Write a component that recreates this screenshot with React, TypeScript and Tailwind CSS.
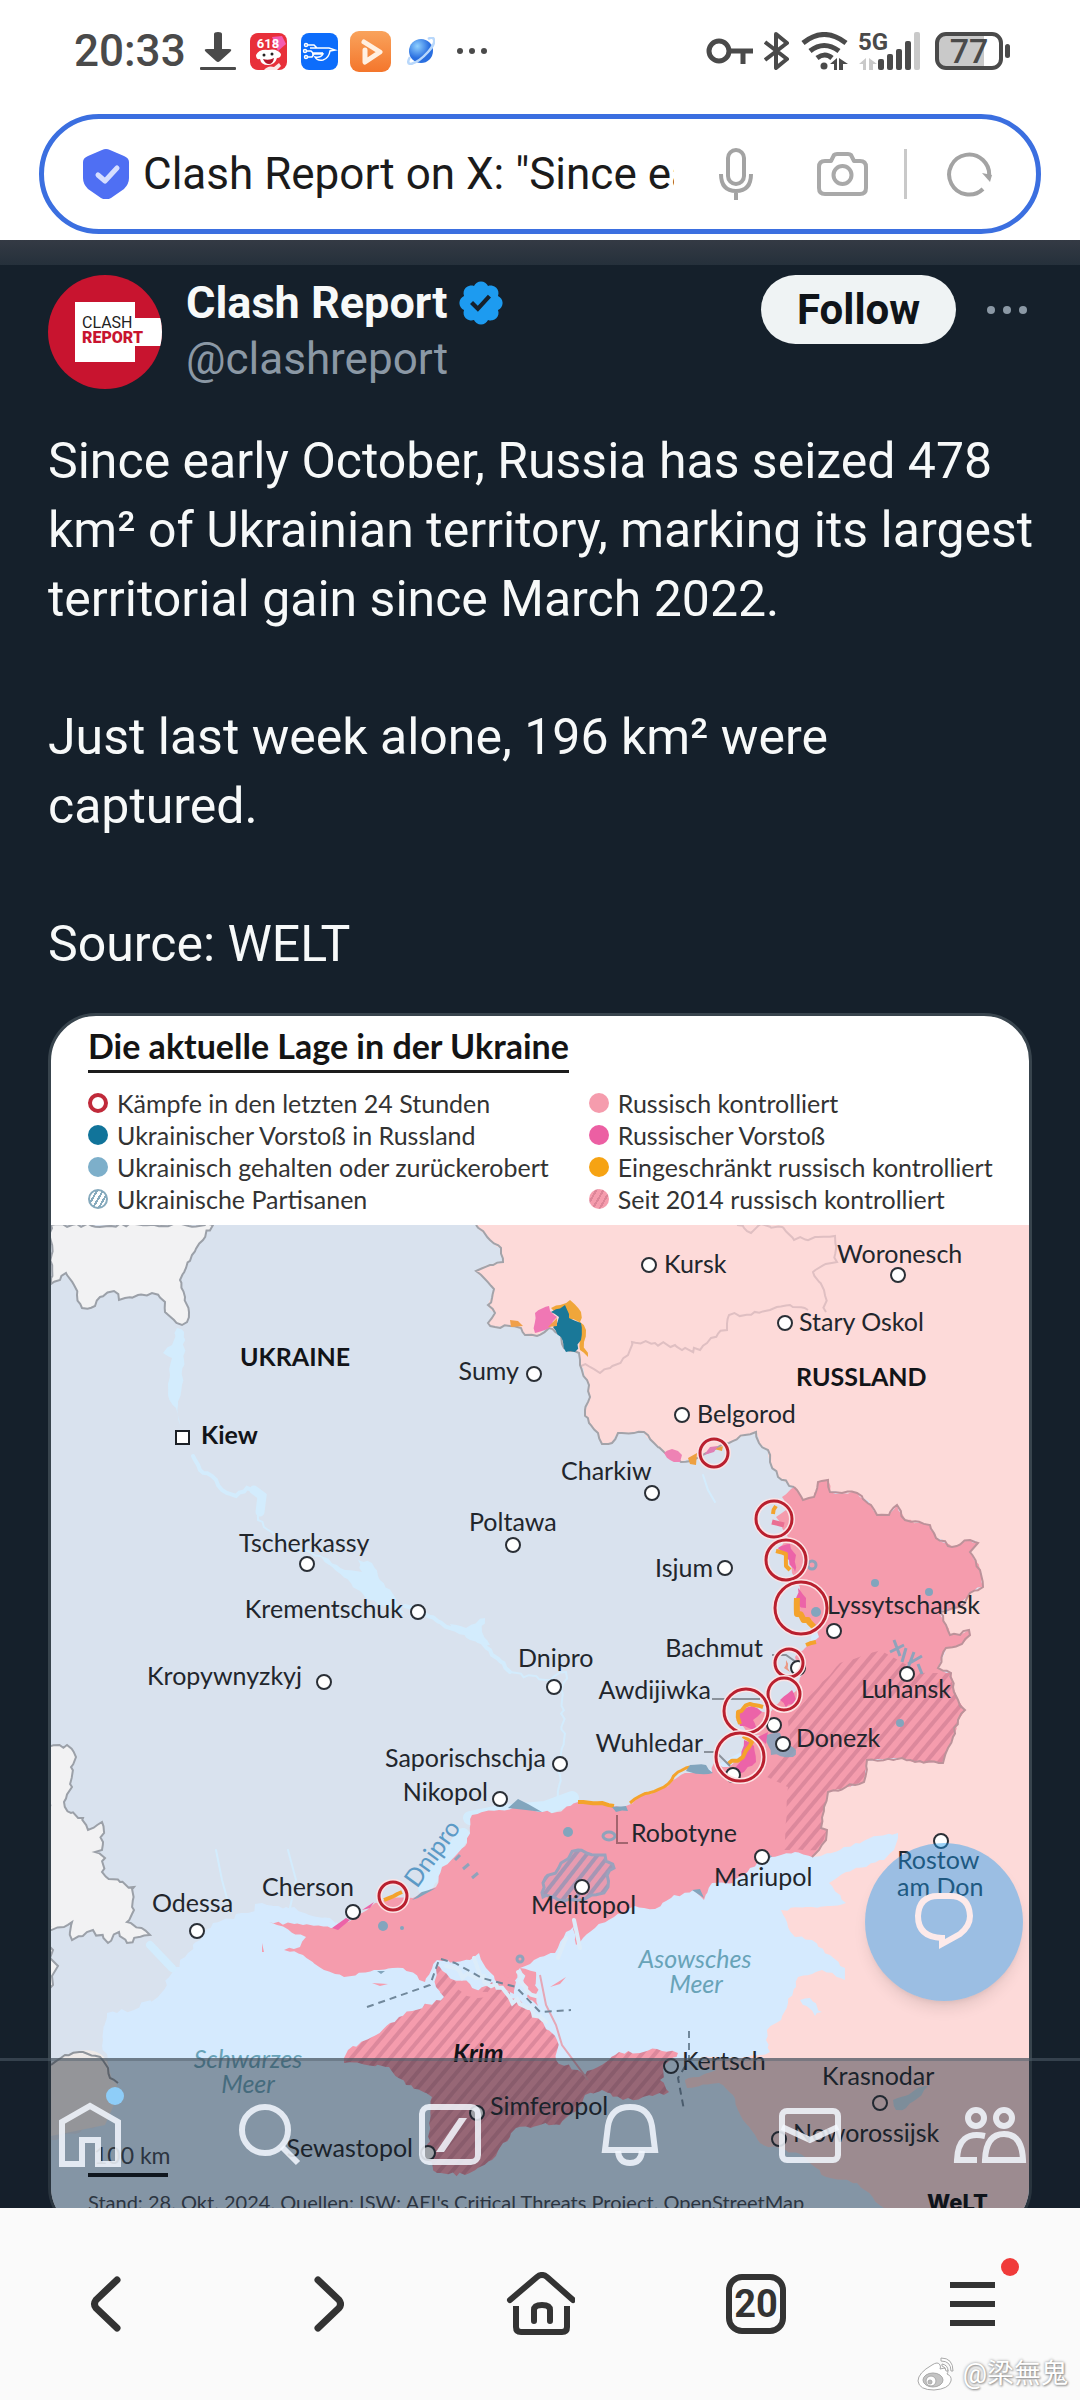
import type { ReactNode } from "react";

type Point = [number, number];

// Turns a coarse outline into a ragged coast / border line. Seeded, so it always draws the same.
function jag(flat: number[], amp = 3, closed = true): string {
  let seed = flat.length * 97 + 13;
  const rand = () => {
    seed = (seed * 1103515245 + 12345) % 2147483648;
    return seed / 2147483648 - 0.5;
  };
  const pts: Point[] = [];
  for (let i = 0; i < flat.length; i += 2) pts.push([flat[i], flat[i + 1]]);
  const out: string[] = [];
  pts.forEach((p, i) => {
    out.push(`${p[0]},${p[1]}`);
    const next = pts[i + 1] ?? (closed ? pts[0] : undefined);
    if (!next) return;
    const dist = Math.hypot(next[0] - p[0], next[1] - p[1]);
    if (dist > 220) return;
    const steps = Math.max(1, Math.round(dist / 5));
    for (let s = 1; s < steps; s++) {
      const t = s / steps;
      out.push(
        `${(p[0] + (next[0] - p[0]) * t + rand() * amp).toFixed(1)},${(p[1] + (next[1] - p[1]) * t + rand() * amp).toFixed(1)}`,
      );
    }
  });
  return `M${out.join(" L")}${closed ? " Z" : ""}`;
}

const northBorder = [
  476, 1225, 490, 1240, 501, 1248, 503, 1262, 490, 1265, 476, 1271, 484, 1278, 494, 1289, 492, 1298, 488, 1305, 495, 1313,
  488, 1323, 495, 1327, 510, 1326, 521, 1328, 525, 1335, 537, 1336, 549, 1328, 561, 1335, 564, 1348, 579, 1353, 580, 1365,
  587, 1380, 590, 1397, 585, 1410, 589, 1423, 598, 1433, 602, 1444, 612, 1443, 618, 1433, 644, 1432, 654, 1443, 664, 1452,
  681, 1462, 697, 1458, 713, 1450, 729, 1443, 745, 1435, 756, 1432, 759, 1443, 768, 1450, 770, 1462, 778, 1477, 794, 1487,
];

const eastBorder = [
  794, 1487, 803, 1500, 814, 1497, 818, 1482, 828, 1480, 830, 1492, 842, 1493, 857, 1493, 871, 1505, 877, 1515, 889, 1515,
  897, 1505, 905, 1520, 930, 1525, 936, 1538, 952, 1547, 970, 1540, 978, 1543, 970, 1552, 980, 1570, 983, 1587, 970, 1593,
  960, 1607, 940, 1612, 946, 1625, 950, 1635, 960, 1635, 969, 1630, 970, 1635, 962, 1644, 946, 1648, 938, 1668, 951, 1673,
  953, 1687, 958, 1700, 965, 1710, 958, 1720, 953, 1737, 948, 1748, 943, 1763, 915, 1762, 902, 1758, 867, 1760, 864, 1782,
  846, 1787, 828, 1792, 824, 1807, 821, 1828, 827, 1830, 826, 1840, 819, 1850, 812, 1857,
];

const russiaCoast = [
  840, 1850, 870, 1838, 898, 1833, 894, 1850, 884, 1860, 846, 1872, 829, 1883, 846, 1903, 812, 1907, 781, 1910, 788, 1927,
  795, 1937, 812, 1940, 830, 1955, 845, 1968, 845, 1980, 822, 1970, 798, 1977, 788, 2003, 781, 2020, 767, 2030, 766, 2040,
  770, 2052, 740, 2058, 706, 2056, 700, 2066, 716, 2070, 685, 2080, 687, 2088, 719, 2083, 733, 2095, 743, 2120, 760, 2143,
  805, 2157, 826, 2177, 857, 2183, 884, 2208, 900, 2232,
];

const occupiedCoast = [
  795, 1852, 781, 1855, 767, 1858, 750, 1868, 733, 1883, 712, 1883, 704, 1900, 693, 1890, 671, 1898, 655, 1909, 635, 1906,
  614, 1917, 595, 1928, 583, 1938, 576, 1945, 574, 1926, 566, 1932, 559, 1945, 555, 1953, 540, 1957, 534, 1960, 520, 1968,
  512, 1985, 500, 1990, 494, 1976, 486, 1968, 479, 1953, 470, 1960, 455, 1962, 437, 1960, 425, 1982, 403, 1968, 379, 1970,
  344, 1977, 324, 1970, 303, 1955, 284, 1950, 300, 1947, 306, 1937, 269, 1922, 303, 1925, 336, 1928, 362, 1913, 375, 1903,
  393, 1898, 413, 1898, 436, 1887, 442, 1867, 458, 1853, 467, 1843, 472, 1815, 499, 1810, 520, 1807, 539, 1812, 557, 1812,
  578, 1802, 602, 1803, 623, 1808, 640, 1797, 664, 1788, 685, 1773, 712, 1772, 714, 1763, 729, 1767, 743, 1757, 750, 1743,
  760, 1735, 747, 1732, 736, 1720, 747, 1708, 767, 1713, 781, 1700, 795, 1692, 802, 1675, 795, 1657, 805, 1648, 819, 1637,
  814, 1627, 796, 1613, 800, 1587, 792, 1573, 790, 1557, 776, 1550, 788, 1537, 776, 1517, 786, 1510, 782, 1497,
];

const crimea = [
  437, 1965, 458, 1983, 475, 1995, 492, 1982, 516, 1999, 540, 2020, 557, 2040, 556, 2060, 585, 2075, 609, 2060, 619, 2052,
  640, 2053, 657, 2049, 678, 2053, 668, 2062, 660, 2080, 669, 2092, 643, 2097, 623, 2100, 602, 2090, 585, 2095, 578, 2108,
  560, 2125, 540, 2125, 516, 2128, 503, 2143, 492, 2160, 465, 2175, 437, 2173, 427, 2160, 430, 2120, 432, 2097, 406, 2085,
  389, 2067, 344, 2063, 348, 2050, 372, 2037, 399, 2017, 444, 1997, 436, 1987,
];

const donbas2014 = [
  840, 1663, 881, 1650, 922, 1673, 951, 1673, 953, 1687, 958, 1700, 965, 1710, 958, 1720, 953, 1737, 948, 1748, 943, 1763,
  915, 1762, 902, 1758, 867, 1760, 864, 1782, 846, 1787, 828, 1792, 824, 1807, 821, 1828, 827, 1830, 819, 1850, 784, 1850,
  788, 1787, 767, 1777, 791, 1747, 788, 1720,
];

const ukraine = [
  51, 1225, 830, 1225, 830, 1500, 800, 1720, 560, 1850, 340, 1926, 330, 1918, 286, 1907, 262, 1903, 248, 1913, 213, 1923,
  188, 1953, 172, 1973, 158, 1997, 134, 2010, 107, 2013, 103, 2040, 110, 2080, 103, 2123, 51, 2140,
];

const belarus = [
  51, 1225, 213, 1225, 203, 1240, 192, 1255, 186, 1268, 180, 1280, 185, 1297, 189, 1312, 187, 1322, 182, 1325, 174, 1320,
  165, 1312, 165, 1302, 152, 1293, 138, 1295, 125, 1298, 119, 1300, 114, 1291, 100, 1297, 95, 1306, 82, 1308, 77, 1295, 74,
  1285, 66, 1273, 60, 1280, 51, 1284,
];

const moldova = [
  48, 1747, 67, 1745, 76, 1757, 71, 1767, 72, 1787, 64, 1802, 71, 1813, 83, 1818, 88, 1830, 102, 1822, 102, 1850, 95, 1852,
  105, 1858, 102, 1872, 120, 1882, 134, 1887, 134, 1910, 127, 1922, 150, 1935, 127, 1943, 119, 1932, 108, 1943, 93, 1930,
  72, 1940, 72, 1922, 48, 1930,
];

const oblastBorders = [
  [
    737, 1225, 744, 1228, 751, 1233, 758, 1226, 782, 1227, 794, 1240, 815, 1237, 835, 1236, 837, 1262, 813, 1272, 824, 1290,
    826, 1312,
  ],
  [
    808, 1310, 790, 1305, 770, 1310, 729, 1315, 727, 1330, 711, 1338, 700, 1350, 682, 1350, 675, 1345, 655, 1343, 632, 1342,
    628, 1355, 610, 1368, 600, 1373, 590, 1367, 581, 1366,
  ],
];

const fights: [number, number, number][] = [
  [714, 1453, 14],
  [774, 1519, 18],
  [786, 1560, 20],
  [801, 1608, 26],
  [789, 1663, 14],
  [784, 1694, 16],
  [746, 1711, 22],
  [740, 1757, 24],
  [393, 1896, 14],
];

type City = { name: string; x: number; y: number; at?: Point; end?: boolean; hollow?: boolean };

// x / y is the text anchor, `at` is the town's ring. `end` aligns the name to its right edge.
const cities: City[] = [
  { name: "Sumy", x: 519, y: 1380, at: [534, 1374], end: true },
  { name: "Poltawa", x: 469, y: 1531, at: [513, 1545] },
  { name: "Tscherkassy", x: 239, y: 1552, at: [307, 1564] },
  { name: "Krementschuk", x: 403, y: 1618, at: [418, 1612], end: true },
  { name: "Kropywnyzkyj", x: 302, y: 1685, at: [324, 1682], end: true },
  { name: "Dnipro", x: 518, y: 1667, at: [554, 1687] },
  { name: "Saporischschja", x: 546, y: 1767, at: [560, 1764], end: true },
  { name: "Nikopol", x: 488, y: 1801, at: [500, 1799], end: true },
  { name: "Cherson", x: 262, y: 1896, at: [353, 1912] },
  { name: "Odessa", x: 152, y: 1912, at: [197, 1931] },
  { name: "Kursk", x: 664, y: 1273, at: [649, 1265] },
  { name: "Woronesch", x: 837, y: 1263, at: [898, 1275] },
  { name: "Stary Oskol", x: 799, y: 1331, at: [785, 1323] },
  { name: "Belgorod", x: 697, y: 1423, at: [682, 1415] },
  { name: "Charkiw", x: 561, y: 1480, at: [652, 1493] },
  { name: "Isjum", x: 713, y: 1577, at: [725, 1568], end: true },
  { name: "Lyssytschansk", x: 827, y: 1614, at: [834, 1631] },
  { name: "Bachmut", x: 763, y: 1657, at: [798, 1668], end: true },
  { name: "Awdijiwka", x: 711, y: 1699, at: [774, 1725], end: true },
  { name: "Wuhledar", x: 703, y: 1752, at: [733, 1775], end: true },
  { name: "Donezk", x: 796, y: 1747, at: [783, 1744] },
  { name: "Luhansk", x: 861, y: 1698, at: [907, 1674] },
  { name: "Robotyne", x: 631, y: 1842 },
  { name: "Mariupol", x: 714, y: 1886, at: [762, 1857] },
  { name: "Melitopol", x: 531, y: 1914, at: [582, 1887] },
  { name: "Rostow", x: 897, y: 1869, at: [941, 1841] },
  { name: "am Don", x: 897, y: 1896 },
  { name: "Kertsch", x: 682, y: 2070, at: [671, 2066], hollow: true },
  { name: "Krasnodar", x: 822, y: 2085, at: [880, 2103], hollow: true },
  { name: "Noworossijsk", x: 793, y: 2142, at: [779, 2139], hollow: true },
  { name: "Simferopol", x: 490, y: 2115, at: [477, 2113] },
  { name: "Sewastopol", x: 413, y: 2157, at: [428, 2153], end: true },
];

const legend = [
  { label: "Kämpfe in den letzten 24 Stunden", dot: "border-4 border-[#c02a3a] bg-white" },
  { label: "Russisch kontrolliert", dot: "bg-[#f59cad]" },
  { label: "Ukrainischer Vorstoß in Russland", dot: "bg-[#11749a]" },
  { label: "Russischer Vorstoß", dot: "bg-[#ec5fa3]" },
  { label: "Ukrainisch gehalten oder zurückerobert", dot: "bg-[#7dafca]" },
  { label: "Eingeschränkt russisch kontrolliert", dot: "bg-[#f6a313]" },
  {
    label: "Ukrainische Partisanen",
    dot: "border-2 border-[#86aabd] bg-[repeating-linear-gradient(120deg,#86aabd_0_2px,#ffffff_2px_5px)]",
  },
  {
    label: "Seit 2014 russisch kontrolliert",
    dot: "bg-[repeating-linear-gradient(120deg,#dd8598_0_2px,#f59cad_2px_6px)]",
  },
];

function WarMap() {
  return (
    <svg viewBox="51 1225 978 1007" className="block w-full font-[Lato,sans-serif]" role="img" aria-label="Karte der Ukraine">
      <defs>
        <pattern id="hatchRed" width="10" height="10" patternUnits="userSpaceOnUse" patternTransform="rotate(40)">
          <rect width="10" height="10" fill="#f59cad" />
          <rect width="4" height="10" fill="#dc889c" />
        </pattern>
        <pattern id="hatchBlue" width="9" height="9" patternUnits="userSpaceOnUse" patternTransform="rotate(38)">
          <rect width="9" height="9" fill="#e79bb0" />
          <rect width="4" height="9" fill="#a596b4" />
        </pattern>
      </defs>
      <rect x="51" y="1225" width="978" height="1007" fill="#d5eafe" />
      <path d={jag(ukraine, 5)} fill="#d9e2ee" />
      <path d={jag(belarus, 4)} fill="#f2f2f3" stroke="#9ba0a8" strokeWidth="2" />
      <path d={jag(moldova, 5)} fill="#f2f2f3" stroke="#9ba0a8" strokeWidth="2" />
      <path d="M48,1945 L53,1950 L50,1958 L58,1966 L52,1976 L53,1985 L48,1990" fill="#f2f2f3" stroke="#9ba0a8" strokeWidth="2" />
      <path d="M51,2065 C75,2045 105,2045 109,2068 L112,2080 L117,2084 L116,2100 L105,2125 L51,2136 Z" fill="#efeae8" />
      <path d={jag([51, 2065, 65, 2055, 83, 2052, 100, 2057, 108, 2068, 110, 2078, 118, 2083], 2, false)} fill="none" stroke="#8f949b" strokeWidth="2" />

      {/* Dnipro and its reservoirs */}
      <g fill="#d3ecfd">
        <path d={jag([177, 1328, 184, 1332, 184, 1360, 182, 1385, 178, 1405, 180, 1425, 176, 1408, 168, 1395, 170, 1375, 172, 1358, 163, 1353, 172, 1345], 3)} />
        <path d={jag([318, 1555, 335, 1570, 370, 1600, 405, 1614, 393, 1594, 380, 1580, 372, 1563, 358, 1560, 362, 1572, 345, 1570], 3)} />
        <path d={jag([450, 1624, 466, 1628, 485, 1618, 482, 1632, 490, 1645, 470, 1640], 4)} />
      </g>
      <g fill="none" stroke="#d3ecfd" strokeLinecap="round">
        <path strokeWidth="4" d={jag([193, 1456, 200, 1470, 212, 1476, 222, 1490, 236, 1496, 247, 1488, 256, 1490], 2, false)} />
        <path strokeWidth="9" d="M254,1490 L262,1496 L260,1512" />
        <path strokeWidth="2" d={jag([260, 1512, 258, 1520, 272, 1532, 290, 1545, 320, 1556], 3, false)} />
        <path strokeWidth="4" d={jag([405, 1606, 425, 1614, 450, 1628, 470, 1634, 490, 1650, 510, 1672], 3, false)} />
        <path strokeWidth="2" d={jag([510, 1672, 545, 1680, 566, 1672, 562, 1700, 564, 1740, 560, 1775, 556, 1800], 4, false)} />
        <path strokeWidth="14" d="M470,1818 L500,1812 L545,1808 L572,1798" />
        <path strokeWidth="14" d={jag([463, 1835, 448, 1858, 436, 1872, 425, 1888], 3, false)} />
        <path strokeWidth="2" d="M216,1850 L222,1880 L228,1902 M288,1850 L296,1880 L290,1908" />
        <path strokeWidth="8" d="M150,1945 L172,1968" />
        <path strokeWidth="2" d="M703,1475 L708,1490 L715,1502" />
      </g>

      {/* Russia */}
      <path d={`${jag([...northBorder, ...eastBorder, ...russiaCoast], 3, false)} L1029,2232 L1029,1225 Z`} fill="#fddad9" />
      {oblastBorders.map((line, i) => (
        <path key={i} d={jag(line, 5, false)} fill="none" stroke="#dfbfc2" strokeWidth="2" />
      ))}
      <path d={jag([893, 2100, 905, 2096, 915, 2090, 928, 2086, 918, 2098, 906, 2108, 896, 2110], 3)} fill="#c9dcea" />
      <path d={jag([800, 2000, 810, 1998, 822, 2012, 815, 2016], 4)} fill="#d5eafe" />

      {/* occupied land */}
      <path d={jag([...eastBorder, ...occupiedCoast], 3)} fill="#f59cad" />
      <path d={jag(crimea, 4)} fill="url(#hatchRed)" />
      <path d={jag(donbas2014, 1)} fill="url(#hatchRed)" />
      <path d={jag([578, 1850, 605, 1855, 614, 1868, 604, 1893, 574, 1900, 543, 1897, 543, 1883, 561, 1863], 6)} fill="url(#hatchBlue)" stroke="#9aa2bd" strokeWidth="3" />
      <path d={jag(northBorder, 3, false)} fill="none" stroke="#a3a3a9" strokeWidth="2" />
      <path d={jag(eastBorder, 3, false)} fill="none" stroke="#bc929a" strokeWidth="2" />

      {/* Sywasch lagoons */}
      <g fill="#f59cad">
        <path d={jag([453, 1980, 470, 1984, 488, 1992, 478, 1998, 462, 1992], 6)} />
        <path d={jag([500, 1972, 516, 1982, 514, 1994, 504, 1990], 6)} />
        <path d={jag([520, 1968, 536, 1972, 538, 2006, 530, 2000], 5)} />
        <path d="M550,1987 L566,1977 L560,1984 Z M372,1983 L388,1984 L380,1986 Z M262,1943 L264,1952 L262,1952 Z" />
      </g>
      <g fill="none" stroke="#dcecf9" strokeLinecap="round" strokeWidth="4">
        <path d={jag([446, 1966, 460, 1972, 476, 1978, 496, 1984, 510, 1998, 528, 2008, 546, 2022], 8, false)} />
        <path d={jag([518, 1972, 526, 1990, 536, 1996], 7, false)} />
        <path d="M474,1958 L480,1975 M574,1920 L580,1948 M566,1938 L558,1958" />
      </g>
      <path d="M540,1975 L546,2005 L556,2025 L562,2045 L588,2080" fill="none" stroke="#e5a7b6" strokeWidth="2" />
      <g fill="none" stroke="#71889b" strokeWidth="2" strokeDasharray="7 5">
        <path d="M367,2007 L430,1985 L439,1960" />
        <path d="M441,1959 L455,1963 L482,1978 L516,1987 L540,2012 L571,2010" />
        <path d="M689,2031 L689,2060 L678,2078 L684,2110" />
      </g>

      {/* Kursk salient */}
      <path d={jag([551, 1308, 570, 1300, 581, 1312, 580, 1322, 586, 1330, 584, 1342, 588, 1357, 580, 1350, 579, 1322, 560, 1314], 3)} fill="#f0a63a" />
      <path d={jag([535, 1313, 549, 1306, 557, 1317, 545, 1330, 535, 1333], 4)} fill="#f077b4" />
      <path d={jag([551, 1312, 565, 1305, 569, 1318, 581, 1323, 581, 1340, 575, 1352, 566, 1352, 561, 1337, 553, 1327, 559, 1317], 3)} fill="#1a7898" />
      <path d="M548,1327 L557,1318 L557,1326 Z M510,1320 L518,1321 L523,1326 L511,1327 Z" fill="#f0a04a" />

      {/* Charkiw front */}
      <path d={jag([664, 1453, 672, 1449, 682, 1455, 680, 1462, 670, 1460], 3)} fill="#ee82b4" />
      <path d="M688,1458 L697,1453 L696,1465 L690,1464 Z M714,1449 L723,1446 L722,1451 Z" fill="#eea040" />
      <path d="M704,1455 L710,1447 L718,1446 L714,1452 Z" fill="#e07fb4" />

      {/* Donbas front */}
      <g fill="#ec63a8">
        <path d={jag([778, 1548, 790, 1544, 796, 1555, 795, 1572, 789, 1560], 3)} />
        <path d={jag([798, 1588, 806, 1598, 806, 1608, 797, 1604], 3)} />
        <path d={jag([737, 1713, 752, 1706, 762, 1712, 753, 1720, 757, 1730, 740, 1726], 4)} />
        <path d={jag([780, 1700, 792, 1690, 796, 1700, 786, 1708], 3)} />
        <path d={jag([744, 1740, 754, 1746, 756, 1762, 744, 1772, 730, 1774, 740, 1762], 4)} />
        <path d="M758,1737 L768,1732 L766,1744 Z M332,1928 L346,1918 L350,1920 L338,1930 Z M362,1910 L374,1902 L370,1908 Z" />
      </g>
      <g fill="none" stroke="#f4a32c" strokeWidth="4" strokeLinejoin="round">
        <path d={jag([776, 1506, 773, 1514], 2, false)} />
        <path d={jag([776, 1551, 786, 1554, 786, 1566, 790, 1570], 3, false)} />
        <path d={jag([797, 1598, 797, 1614, 808, 1620, 814, 1627], 4, false)} strokeWidth="6" />
        <path d={jag([806, 1645, 816, 1642], 2, false)} />
        <path d={jag([763, 1707, 750, 1704, 738, 1712, 740, 1724], 3, false)} />
        <path d={jag([743, 1736, 752, 1742, 743, 1757, 728, 1764], 3, false)} />
        <path d={jag([578, 1802, 602, 1803, 614, 1806], 2, false)} />
        <path d={jag([630, 1803, 640, 1796, 664, 1787, 678, 1772, 690, 1767], 2, false)} strokeWidth="3" />
        <path d={jag([384, 1900, 394, 1896, 402, 1892], 2, false)} />
      </g>
      <path d={jag([772, 1522, 784, 1525], 3, false)} stroke="#ea6f92" strokeWidth="5" fill="none" />
      <path d={jag([786, 1660, 790, 1672, 784, 1668], 3)} fill="#eb9a86" />
      <g fill="#82a5bd">
        <path d={jag([686, 1771, 690, 1765, 706, 1765, 713, 1773, 700, 1774], 2)} />
        <path d={jag([767, 1735, 780, 1733, 796, 1750, 793, 1757, 771, 1755], 4)} opacity="0.85" />
        <path d={jag([612, 1807, 626, 1806, 628, 1811, 616, 1812], 2)} />
        <path d="M508,1808 L518,1799 L528,1804 L542,1812 L526,1810 Z M412,1900 L422,1892 L436,1888 L418,1898 Z" />
        <path d="M692,1890 L700,1889 L704,1898 Z M762,1853 L772,1856 L768,1860 Z M377,1971 L385,1971 L381,1974 Z" />
        <circle cx="875" cy="1583" r="4" />
        <circle cx="929" cy="1592" r="4" />
        <circle cx="816" cy="1612" r="5" />
        <circle cx="900" cy="1723" r="4" />
        <circle cx="568" cy="1832" r="5" />
        <circle cx="383" cy="1926" r="5" />
        <circle cx="402" cy="1928" r="2" />
      </g>
      <g fill="none" stroke="#8fa3bb" strokeWidth="3">
        <circle cx="812" cy="1565" r="4" />
        <ellipse cx="609" cy="1836" rx="6" ry="4" />
        <circle cx="520" cy="1959" r="3" />
        <path d="M890,1652 L904,1645 M894,1640 L900,1656 M906,1648 L902,1662 M908,1664 L922,1656 M914,1652 L908,1668 M918,1664 L922,1674" />
        <path d="M455,1860 L460,1855 M463,1869 L469,1864 M472,1878 L478,1873" />
      </g>

      <g fill="none" stroke="#8b929b" strokeWidth="2">
        <path d="M617,1815 L617,1843 L628,1843" stroke="#a3656f" />
        <path d="M712,1699 L760,1699 M704,1752 L716,1752 L730,1766 M772,1655 L786,1655 L796,1662" />
      </g>

      {cities.map(
        (c) =>
          c.at && (
            <circle key={c.name} cx={c.at[0]} cy={c.at[1]} r="7" fill={c.hollow ? "none" : "#ffffff"} stroke="#2a2f36" strokeWidth="2" />
          ),
      )}
      <rect x="176" y="1431" width="13" height="13" fill="#ffffff" stroke="#1c2026" strokeWidth="2" />

      {fights.map(([x, y, r]) => (
        <g key={`${x}-${y}`} fill="none">
          <circle cx={x} cy={y} r={r} stroke="#fbe4e6" strokeWidth="6" />
          <circle cx={x} cy={y} r={r} stroke="#b9202f" strokeWidth="3" />
        </g>
      ))}

      <g fontSize="25" fill="#22262c">
        {cities.map((c) => (
          <text key={c.name} x={c.x} y={c.y} textAnchor={c.end ? "end" : "start"}>
            {c.name}
          </text>
        ))}
      </g>
      <g fontSize="25" fontWeight="700" fill="#121418">
        <text x="201" y="1444">Kiew</text>
        <text x="240" y="1366">UKRAINE</text>
        <text x="796" y="1386">RUSSLAND</text>
        <text x="453" y="2062" fontStyle="italic">Krim</text>
      </g>
      <g fontSize="25" fontStyle="italic" fill="#68a3b8" textAnchor="middle">
        <text x="695" y="1968">Asowsches</text>
        <text x="696" y="1993">Meer</text>
        <text x="248" y="2068">Schwarzes</text>
        <text x="248" y="2093">Meer</text>
      </g>
      <text transform="translate(417 1889) rotate(-54)" fontSize="25" fill="#5c9ac6">
        Dnipro
      </text>
      <text x="94" y="2164" fontSize="23" fill="#3d4650">100 km</text>
      <path d="M88,2175 L168,2175" stroke="#0d1218" strokeWidth="4" />
      <text x="88" y="2210" fontSize="20" fill="#3d4650">
        Stand: 28. Okt. 2024. Quellen: ISW; AEI's Critical Threats Project. OpenStreetMap
      </text>
      <text x="927" y="2210" fontSize="22" fontWeight="800" fill="#0b0d10" className="font-[Inter,sans-serif]">WeLT</text>
    </svg>
  );
}

function StatusBar() {
  return (
    <div className="flex h-[102px] items-center justify-between pr-[70px] pl-[74px] text-[#4a4a4a]">
      <div className="flex items-center">
        <span className="text-[44px] leading-none font-medium">20:33</span>
        <svg viewBox="0 0 36 38" className="ml-[14px] h-[38px] w-9" fill="currentColor">
          <path d="M14 2q0-2 4-2t4 2v15h7q4 0 1 3L20 29q-2 2-4 0L6 20q-3-3 1-3h7z" />
          <rect y="35" width="36" height="3" rx="1" />
        </svg>
        <svg viewBox="0 0 37 37" className="ml-[14px] size-[37px]">
          <rect width="37" height="37" rx="8" fill="#e8303a" />
          <path d="M22 4l10-1 4 8-8 7z" fill="#f45bb0" />
          <text x="18" y="15" fontSize="13" fontWeight="700" fill="#fff" textAnchor="middle">618</text>
          <path d="M6 22q3-6 12-5 9-2 13 4 0 4-4 4-2 7-9 7t-8-6q-4 1-4-4z" fill="#fff" />
          <circle cx="14" cy="22" r="1.500" fill="#222" />
          <circle cx="22" cy="21" r="1.500" fill="#222" />
          <path d="M13 26q6 2 11-1-1 6-5 6t-6-5z" fill="#b3172a" />
          <path d="M14 37q4-5 10-3l5-4 2 3-4 4z" fill="#fbe7e7" />
        </svg>
        <svg viewBox="0 0 37 37" className="ml-[14px] size-[37px]" fill="none" stroke="#fff" strokeWidth="1.500">
          <rect width="37" height="37" rx="8" fill="#0d6dfb" stroke="none" />
          <path d="M7 12h6l3 3h12l6 2-5 1q-1 7-7 9-6 1-8-3 6 1 8-3H11M5 18h5l2 2h10M6 24h5l2-3M9 15h9" />
          <circle cx="5" cy="12" r="1.500" />
          <circle cx="4" cy="18" r="1.500" />
          <circle cx="5" cy="24" r="1.500" />
        </svg>
        <svg viewBox="0 0 41 41" className="ml-3 size-[41px]">
          <defs>
            <linearGradient id="play" x2="0" y2="1">
              <stop stopColor="#f9a35c" />
              <stop offset="1" stopColor="#f4762c" />
            </linearGradient>
          </defs>
          <rect width="41" height="41" rx="9" fill="url(#play)" />
          <path d="M14 11l16 10-15 10V19" fill="none" stroke="#fff0e2" strokeWidth="5" strokeLinejoin="round" strokeLinecap="round" />
        </svg>
        <svg viewBox="0 0 28 28" className="ml-4 size-7">
          <defs>
            <radialGradient id="planet" cx="0.35" cy="0.3">
              <stop stopColor="#8fd0ff" />
              <stop offset="1" stopColor="#2a6fe0" />
            </radialGradient>
          </defs>
          <circle cx="14" cy="14" r="12" fill="url(#planet)" />
          <path d="M3 20Q-1 27 4 27 12 25 21 15 30 5 26 1 24 0 21 2" fill="none" stroke="#b9d8fb" strokeWidth="2.500" />
        </svg>
        <svg viewBox="0 0 30 6" className="ml-[22px] h-[6px] w-[30px]" fill="currentColor">
          <circle cx="3" cy="3" r="3" />
          <circle cx="15" cy="3" r="3" />
          <circle cx="27" cy="3" r="3" />
        </svg>
      </div>
      <div className="flex items-center">
        <svg viewBox="0 0 47 26" className="h-[26px] w-[47px]" fill="none" stroke="currentColor" strokeWidth="5">
          <circle cx="13" cy="13" r="10" />
          <path d="M23 13h24M37 13v13" />
        </svg>
        <svg viewBox="0 0 26 38" className="ml-[11px] h-[38px] w-[26px]" fill="none" stroke="currentColor" strokeWidth="4" strokeLinejoin="round">
          <path d="M1 10l22 17-11 9V2l11 9L1 28" />
        </svg>
        <svg viewBox="0 0 48 38" className="ml-[11px] h-[38px] w-12" fill="none" stroke="currentColor" strokeWidth="5">
          <path d="M2 11q21-17 43 0M9 19q14-11 29 0M16 26q8-6 15 0" />
          <circle cx="23" cy="34" r="3.500" fill="currentColor" stroke="none" />
          <path d="M36 26v12h-3v-6h-4zM38 26l9 6h-5v6h-4z" fill="currentColor" stroke="none" />
        </svg>
        <svg viewBox="0 0 62 38" className="ml-[10px] h-[38px] w-[62px] overflow-visible" fill="currentColor">
          <text x="-1" y="18" fontSize="24" fontWeight="700">5G</text>
          <path d="M7 26v12H4v-6H0zM10 26l8 6h-4v6h-4z" fill="#c9c9c9" />
          <rect x="19" y="27" width="6" height="11" rx="2" />
          <rect x="28" y="22" width="6" height="16" rx="2" />
          <rect x="37" y="17" width="6" height="21" rx="2" />
          <rect x="46" y="9" width="6" height="29" rx="2" />
          <rect x="55" y="0" width="6" height="38" rx="2" fill="#c9c9c9" />
        </svg>
        <div className="ml-[14px] flex items-center gap-[2px]">
          <div className="flex h-[38px] w-[68px] items-center justify-center rounded-[11px] border-4 border-current bg-linear-to-r from-[#c9c9c9] from-75% to-white to-75% text-[34px] leading-none font-medium">
            77
          </div>
          <div className="h-[14px] w-[5px] rounded-full bg-current" />
        </div>
      </div>
    </div>
  );
}

function AddressBar() {
  return (
    <form className="mx-[39px] mt-3 mb-[6px] flex h-[120px] items-center rounded-full border-5 border-[#3b6fe0] pr-[43px] pl-[39px]">
      <svg viewBox="0 0 46 50" className="h-[50px] w-[46px] shrink-0">
        <path d="M19 1q4-2 8 0l14 6q5 2 5 6v16q0 6-5 11L28 49q-5 3-10 0L5 40q-5-5-5-11V13q0-4 5-6z" fill="#4f6ff3" />
        <path d="M15 26l7 6 12-13" fill="none" stroke="#d6deff" strokeWidth="5" strokeLinecap="round" strokeLinejoin="round" />
      </svg>
      <input
        aria-label="Address"
        readOnly
        defaultValue={'Clash Report on X: "Since early October'}
        className="ml-[14px] min-w-0 flex-1 bg-transparent text-[44px] leading-[60px] text-[#1b1b1b] outline-none"
      />
      <button type="button" aria-label="Voice search" className="ml-[45px] text-[#a3a3a3]">
        <svg viewBox="0 0 34 52" className="h-[52px] w-[34px]" fill="none" stroke="currentColor" strokeWidth="4">
          <rect x="9" y="2" width="16" height="34" rx="8" />
          <path d="M2 26q0 17 15 17t15-17M17 43v9" />
        </svg>
      </button>
      <button type="button" aria-label="Scan" className="ml-16 text-[#a9a9a9]">
        <svg viewBox="0 0 51 44" className="h-11 w-[51px]" fill="none" stroke="currentColor" strokeWidth="4" strokeLinejoin="round">
          <path d="M8 9h6l3-6q1-1 3-1h11q2 0 3 1l3 6h6q6 0 6 6v21q0 6-6 6H8q-6 0-6-6V15q0-6 6-6z" />
          <circle cx="25.500" cy="23" r="9" />
        </svg>
      </button>
      <span className="ml-9 h-[50px] w-[3px] bg-[#c9c9c9]" />
      <button type="button" aria-label="Reload" className="ml-10 text-[#a3a3a3]">
        <svg viewBox="0 0 46 46" className="size-[46px]" fill="none" stroke="currentColor" strokeWidth="4">
          <path d="M36 38a20 20 0 1 1 6-12" />
          <path d="M35 22l10 2-2 7z" fill="currentColor" stroke="none" />
        </svg>
      </button>
    </form>
  );
}

function VerifiedBadge() {
  return (
    <svg viewBox="1 1 20 20" className="size-[46px]">
      <path
        d="M20.396 11c-.018-.646-.215-1.275-.57-1.816-.354-.54-.852-.972-1.438-1.246.223-.607.27-1.264.14-1.897-.131-.634-.437-1.218-.882-1.687-.47-.445-1.053-.75-1.687-.882-.633-.13-1.290-.083-1.897.14-.273-.587-.704-1.086-1.245-1.440S11.647 1.620 11 1.604c-.646.017-1.273.213-1.813.568s-.969.854-1.240 1.440c-.608-.223-1.267-.272-1.902-.14-.635.130-1.220.436-1.690.882-.445.470-.749 1.055-.878 1.688-.130.633-.080 1.290.144 1.896-.587.274-1.087.705-1.443 1.245-.356.540-.555 1.170-.574 1.817.020.647.218 1.276.574 1.817.356.540.856.972 1.443 1.245-.224.606-.274 1.263-.144 1.896.130.634.433 1.218.877 1.688.470.443 1.054.747 1.687.878.633.132 1.290.084 1.897-.136.274.586.705 1.084 1.246 1.439.540.354 1.170.551 1.816.569.647-.016 1.276-.213 1.817-.567s.972-.854 1.245-1.440c.604.239 1.266.296 1.903.164.636-.132 1.220-.447 1.680-.907.460-.460.776-1.044.908-1.681s.075-1.299-.165-1.903c.586-.274 1.084-.705 1.439-1.246.354-.540.551-1.170.569-1.816z"
        fill="#1d9bf0"
      />
      <path d="M9.662 14.850l-3.429-3.428 1.293-1.302 2.072 2.072 4.400-4.794 1.347 1.246z" fill="#15202b" />
    </svg>
  );
}

function PostHeader() {
  return (
    <div className="flex items-start pr-1">
      <svg viewBox="0 0 114 114" className="size-[114px] shrink-0" role="img" aria-label="Clash Report">
        <clipPath id="avatar">
          <circle cx="57" cy="57" r="57" />
        </clipPath>
        <g clipPath="url(#avatar)">
          <rect width="114" height="114" fill="#c8142f" />
          <rect x="27" y="27" width="60" height="60" fill="#fff" />
          <rect x="87" y="43" width="27" height="28" fill="#fff" />
        </g>
        <text x="34" y="53" fontSize="16" fill="#222">CLASH</text>
        <text x="34" y="68" fontSize="16" fontWeight="900" fill="#c8142f">REPORT</text>
      </svg>
      <div className="ml-6">
        <div className="flex items-center gap-[10px]">
          <span className="text-[45px] leading-[56px] font-bold text-[#f7f9f9]">Clash Report</span>
          <VerifiedBadge />
        </div>
        <div className="text-[44px] leading-[56px] text-[#8b98a5]">@clashreport</div>
      </div>
      <button type="button" className="ml-auto h-[69px] w-[195px] rounded-full bg-[#eff3f4] text-[42px] leading-none font-bold text-[#0f1419]">
        Follow
      </button>
      <button type="button" aria-label="More" className="ml-[30px] flex h-[69px] items-center text-[#8b98a5]">
        <svg viewBox="0 0 42 8" className="h-2 w-[42px]" fill="currentColor">
          <circle cx="5" cy="4" r="4" />
          <circle cx="21" cy="4" r="4" />
          <circle cx="37" cy="4" r="4" />
        </svg>
      </button>
    </div>
  );
}

function TabLink({ label, children }: { label: string; children: ReactNode }) {
  return (
    <a href="#" aria-label={label} className="flex items-center justify-center">
      {children}
    </a>
  );
}

function AppTabs() {
  const icon = "h-[72px] w-[72px] overflow-visible";
  return (
    <nav className="absolute inset-x-0 bottom-0 grid h-[150px] grid-cols-6 border-t-3 border-[#566470]/50 bg-[#15202b]/42 text-[#f3f8ff]/85">
      <TabLink label="Home">
        <span className="relative">
          <svg viewBox="0 0 72 72" className={icon} fill="none" stroke="currentColor" strokeWidth="6">
            <path d="M8 65V23L36 7l28 16v42H44V41H28v24z" />
          </svg>
          <span className="absolute -top-3 right-[2px] size-[18px] rounded-full bg-[#8ecdf8]" />
        </span>
      </TabLink>
      <TabLink label="Search">
        <svg viewBox="0 0 72 72" className={icon} fill="none" stroke="currentColor" strokeWidth="6">
          <circle cx="31" cy="31" r="23" />
          <path d="M48 48l16 16" />
        </svg>
      </TabLink>
      <TabLink label="Grok">
        <svg viewBox="0 0 72 72" className={icon} fill="none" stroke="currentColor" strokeWidth="6">
          <rect x="8" y="8" width="56" height="55" rx="7" />
          <path d="M45 19h8L30 53h-8z" fill="currentColor" stroke="none" />
        </svg>
      </TabLink>
      <TabLink label="Notifications">
        <svg viewBox="0 0 72 72" className={icon} fill="none" stroke="currentColor" strokeWidth="6">
          <path d="M11 51l3-24Q17 8 36 8t22 19l3 24z" />
          <path d="M24 52q1 12 12 12t12-12" />
        </svg>
      </TabLink>
      <TabLink label="Messages">
        <svg viewBox="0 0 72 72" className={icon} fill="none" stroke="currentColor" strokeWidth="6">
          <rect x="8" y="12" width="56" height="49" rx="5" />
          <path d="M8 28l28 13 28-13" />
        </svg>
      </TabLink>
      <TabLink label="Communities">
        <svg viewBox="0 0 72 72" className={icon} fill="none" stroke="currentColor" strokeWidth="6">
          <circle cx="22" cy="19" r="8" />
          <circle cx="50" cy="19" r="8" />
          <path d="M31 37Q4 31 3 61h20" />
          <path d="M31 61q1-26 19-26t19 26z" />
        </svg>
      </TabLink>
    </nav>
  );
}

function BrowserBar() {
  const item = "flex items-center justify-center";
  return (
    <footer className="relative grid h-48 shrink-0 grid-cols-5 bg-[#fafafa] text-[#333333]">
      <button type="button" aria-label="Back" className={item}>
        <svg viewBox="0 0 40 60" className="h-[60px] w-10" fill="none" stroke="currentColor" strokeWidth="7" strokeLinecap="round">
          <path d="M29 6L8 26q-3 4 0 8l21 20" />
        </svg>
      </button>
      <button type="button" aria-label="Forward" className={item}>
        <svg viewBox="0 0 40 60" className="h-[60px] w-10" fill="none" stroke="currentColor" strokeWidth="7" strokeLinecap="round">
          <path d="M14 6l21 20q3 4 0 8L14 54" />
        </svg>
      </button>
      <button type="button" aria-label="Home page" className={item}>
        <svg viewBox="0 0 70 64" className="h-16 w-[70px]" fill="none" stroke="currentColor" strokeWidth="6" strokeLinecap="round">
          <path d="M5 28L32 5q5-4 10 0l26 23" />
          <path d="M11 34v21q0 5 5 5h41q5 0 5-5V34" strokeLinecap="butt" />
          <path d="M29 49V38q0-5 8-5t8 5v11" />
        </svg>
      </button>
      <button type="button" aria-label="Tabs" className={item}>
        <span className="flex size-[60px] items-center justify-center rounded-2xl border-6 border-current text-[38px] leading-none font-bold">
          20
        </span>
      </button>
      <button type="button" aria-label="Menu" className={item}>
        <span className="relative flex w-[45px] flex-col gap-[13px]">
          <span className="h-[6px] bg-current" />
          <span className="h-[6px] bg-current" />
          <span className="h-[6px] bg-current" />
          <span className="absolute -top-6 -right-6 size-[18px] rounded-full bg-[#f03b3a]" />
        </span>
      </button>
      <div className="absolute right-3 bottom-2 flex items-center gap-2 text-[27px] leading-[36px] text-white [text-shadow:0_0_3px_#8b8b8b,1px_1px_2px_#9a9a9a]">
        <svg viewBox="0 0 38 34" className="h-[34px] w-[38px]" fill="#fff" stroke="#a9a9a9" strokeWidth="1">
          <path d="M15 8q6-4 8 0 1 2 0 4 7-2 8 1 0 3-1 4 5 2 4 7-2 8-17 9Q2 33 1 24 1 16 15 8z" />
          <path d="M24 1q12 0 12 13h-2Q34 4 24 4zM25 7q6 1 6 7h-2q0-4-4-5z" />
          <ellipse cx="16" cy="23" rx="10" ry="7" fill="#c4c4c4" />
          <circle cx="14" cy="24" r="5" />
          <circle cx="13" cy="25" r="2" fill="#bbb" />
        </svg>
        <span>@梁無鬼</span>
      </div>
    </footer>
  );
}

export default function App() {
  return (
    <div className="flex h-screen flex-col overflow-hidden bg-white font-[Roboto,'Noto_Sans_CJK_TC',sans-serif]">
      <header className="shrink-0">
        <StatusBar />
        <AddressBar />
      </header>
      <main className="relative min-h-0 flex-1 overflow-hidden bg-[#15202b]">
        <div className="h-[25px] bg-linear-to-b from-[#343a44] to-[#25303b]" />
        <article className="px-12 pt-[10px]">
          <PostHeader />
          <p className="-mr-1 mt-[38px] text-[50px] leading-[69px] whitespace-pre-line text-[#f7f9f9]">
            {`Since early October, Russia has seized 478 km² of Ukrainian territory, marking its largest territorial gain since March 2022.

            Just last week alone, 196 km² were captured.

            Source: WELT`}
          </p>
          <figure className="mt-[34px] overflow-hidden rounded-[48px] border-3 border-[#38444d] bg-white font-[Lato,sans-serif]">
            <figcaption className="px-[37px] pt-3 pb-[10px]">
              <h2 className="inline-block border-b-3 border-[#1d1d1d] pb-[6px] text-[34px] leading-[36px] font-bold text-[#141414]">
                Die aktuelle Lage in der Ukraine
              </h2>
              <ul className="mt-[14px] grid grid-cols-[auto_1fr] gap-x-10 text-[25px] leading-8 whitespace-nowrap text-[#333333]">
                {legend.map(({ label, dot }) => (
                  <li key={label} className="flex items-center gap-[9px]">
                    <span className={`size-5 shrink-0 rounded-full ${dot}`} />
                    {label}
                  </li>
                ))}
              </ul>
            </figcaption>
            <WarMap />
          </figure>
        </article>
        <button
          type="button"
          aria-label="New chat"
          className="absolute right-[57px] bottom-[207px] flex size-[158px] items-center justify-center rounded-full bg-[#1d9bf0]/44 shadow-lg"
        >
          <svg viewBox="0 0 60 60" className="size-[60px]" fill="none" stroke="#fdeaea" strokeWidth="6">
            <path d="M28 46Q4 45 4 24 5 4 24 4h12q19 0 20 20 0 10-10 18L28 52z" />
          </svg>
        </button>
        <AppTabs />
      </main>
      <BrowserBar />
    </div>
  );
}
